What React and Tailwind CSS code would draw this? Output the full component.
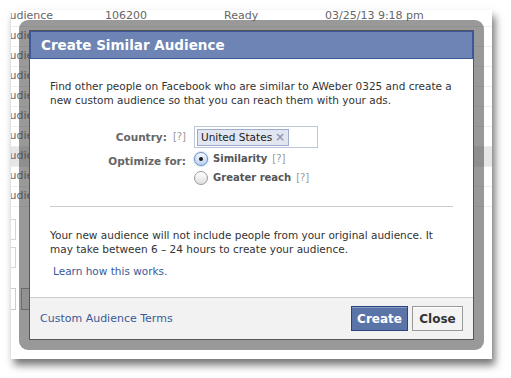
import React from "react";

const font = "font-['DejaVu_Sans','Noto_Sans',sans-serif]";

const rows = Array.from({ length: 10 });

function Radio({ checked }) {
  return (
    <span
      className={`flex h-[14px] w-[14px] items-center justify-center rounded-full border ${
        checked
          ? "border-[#6d8fc4] bg-[linear-gradient(#f4f8ff,#bcd2f0)] shadow-[0_0_2px_#7aa7e6]"
          : "border-[#9a9a9a] bg-[linear-gradient(#ffffff,#dedede)]"
      }`}
    >
      {checked ? <span className="h-[4px] w-[4px] rounded-full bg-[#1a1a1a]" /> : null}
    </span>
  );
}

export default function App() {
  return (
    <div className={`h-[378px] w-[511px] overflow-hidden bg-white pl-[11px] pt-[10px] ${font}`}>
      <div className="relative h-[349px] w-[481px] overflow-hidden bg-white shadow-[3px_6px_8px_rgba(0,0,0,0.55)]">
        <div className="mt-[-3px]">
          {rows.map((_, i) => (
            <div
              key={i}
              className={`flex h-[20px] items-center border-b border-[#eeeeee] text-[11px] text-[#666] ${i === 7 ? "bg-[#e6e6e6]" : ""}`}
            >
              <span className="ml-[-9px] w-[103px]">Audience</span>
              {i === 0 ? (
                <>
                  <span className="w-[119px]">106200</span>
                  <span className="w-[101px]">Ready</span>
                  <span>03/25/13 9:18 pm</span>
                </>
              ) : null}
            </div>
          ))}
          <div className="mt-[12px] ml-[-20px] h-[21px] w-[25px] border border-[#cfd6e3]" />
          <div className="mt-[7px] ml-[-20px] h-[21px] w-[25px] border border-[#cfd6e3]" />
          <div className="mt-[20px] flex gap-[5px]">
            <div className="ml-[-20px] h-[22px] w-[25px] border border-[#cccccc]" />
            <div className="h-[22px] w-[30px] border border-[#999] bg-[#eee]" />
          </div>
        </div>

        <div className="absolute left-[8px] top-[10px] h-[330px] w-[465px] rounded-[9px] bg-[rgba(70,70,70,0.55)] p-[10px]">
          <div className="flex h-full flex-col border border-[#555] bg-white">
            <div className="flex h-[28px] items-center border border-[#3b5998] bg-[#6d84b4] pl-[10px] text-[13.5px] font-bold text-white">
              Create Similar Audience
            </div>
            <div className="flex-1 pl-[20px] pr-[10px] pt-[20px] text-[10.5px] leading-[14px] text-[#333]">
              <p className="whitespace-nowrap">
                Find other people on Facebook who are similar to AWeber 0325 and create a
                <br />
                new custom audience so that you can reach them with your ads.
              </p>
              <div className="mt-[19px] flex items-center">
                <div className="flex w-[136px] justify-end gap-[6px]">
                  <span className="font-bold text-[#666]">Country:</span>
                  <span className="text-[10px] text-[#999]">[?]</span>
                </div>
                <div className="ml-[8px] flex h-[22px] w-[124px] items-center border border-[#bdc7d8] px-[2px]">
                  <span className="flex h-[17px] items-center gap-[3px] border border-[#9daccc] bg-[#e2e6f0] px-[3px] text-[#1a1a1a]">
                    United States
                    <span className="text-[12px] font-bold text-[#8a9ab8]">×</span>
                  </span>
                </div>
              </div>
              <div className="mt-[4px] flex">
                <div className="flex w-[136px] justify-end pt-[2px]">
                  <span className="font-bold text-[#666]">Optimize for:</span>
                </div>
                <div className="ml-[8px] flex flex-col gap-[5px] text-[10px]">
                  <div className="flex items-center gap-[5px]">
                    <Radio checked />
                    <span className="font-bold text-[#555]">Similarity</span>
                    <span className="text-[#999]">[?]</span>
                  </div>
                  <div className="flex items-center gap-[5px]">
                    <Radio />
                    <span className="font-bold text-[#555]">Greater reach</span>
                    <span className="text-[#999]">[?]</span>
                  </div>
                </div>
              </div>
              <div className="mr-[10px] mt-[21px] border-t border-[#cccccc]" />
              <p className="mt-[21px] whitespace-nowrap">
                Your new audience will not include people from your original audience. It
                <br />
                may take between 6 – 24 hours to create your audience.
              </p>
              <p className="mt-[8px] pl-[3px] text-[#3b5998]">Learn how this works.</p>
            </div>
            <div className="flex h-[42px] items-center justify-between border-t border-[#cccccc] bg-[#f2f2f2] pl-[10px] pr-[10px] text-[11px]">
              <span className="pt-[2px] text-[#3b5998]">Custom Audience Terms</span>
              <div className="flex gap-[4px]">
                <button className="h-[25px] w-[57px] border border-[#29447e] bg-[#5b74a8] text-[12px] font-bold text-white shadow-[inset_0_1px_0_#8a9cc2]">
                  Create
                </button>
                <button className="h-[25px] w-[51px] border border-[#999] bg-[#f3f3f3] text-[12px] font-bold text-[#333] shadow-[inset_0_1px_0_#fff]">
                  Close
                </button>
              </div>
            </div>
          </div>
        </div>
      </div>
    </div>
  );
}
